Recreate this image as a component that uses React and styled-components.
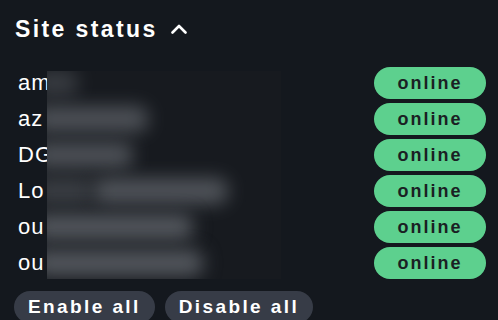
import React from 'react';
import styled, { createGlobalStyle } from 'styled-components';

const GlobalStyle = createGlobalStyle`
    html, body {
        margin: 0;
        background: #14181e;
    }
    body {
        font-family: "Liberation Sans", Arial, sans-serif;
        color: #ffffff;
    }
`

const Panel = styled.div`
    width: 498px;
    height: 320px;
    overflow: hidden;
    position: relative;
    box-sizing: border-box;
    padding: 14px 12px 0 14px;
    background: #14181e;
`

const Header = styled.div`
    display: flex;
    align-items: center;
    gap: 13px;
    height: 30px;
    margin-left: 1px;
`

const Title = styled.h2`
    margin: 0;
    font-size: 23px;
    font-weight: 700;
    letter-spacing: 2.4px;
`

const List = styled.div`
    display: flex;
    flex-direction: column;
    gap: 4px;
    margin-top: 23px;
`

const Row = styled.div`
    display: flex;
    align-items: center;
    justify-content: space-between;
    height: 32px;
`

const Name = styled.span`
    margin-left: 4px;
    width: 29px;
    overflow: hidden;
    font-size: 22px;
    letter-spacing: 1px;
    white-space: nowrap;
`

const Pill = styled.span`
    width: 112px;
    height: 32px;
    border-radius: 16px;
    background: #5dd08e;
    color: #1a1f24;
    font-size: 18px;
    font-weight: 700;
    letter-spacing: 2px;
    display: flex;
    align-items: center;
    justify-content: center;
`

/* blurred cover over the private part of the site names */
const Redact = styled.div`
    position: absolute;
    left: 47px;
    top: 71px;
    width: 234px;
    height: 208px;
    overflow: hidden;
    background: #171a1f;
    display: flex;
    flex-direction: column;
    gap: 4px;
`

const Lane = styled.div`
    height: 32px;
    flex-shrink: 0;
    display: flex;
    align-items: center;
    margin-left: -14px;
`

const Smear = styled.div`
    height: 26px;
    width: ${p => p.$w}px;
    border-radius: 10px;
    background: #53575d;
    opacity: ${p => p.$o};
    filter: blur(9px);
`

const Actions = styled.div`
    display: flex;
    gap: 10px;
    margin-top: 12px;
`

const Button = styled.button`
    height: 32px;
    padding: 0 14px;
    border: none;
    border-radius: 16px;
    background: #373c47;
    color: #ffffff;
    font-family: "Liberation Sans", Arial, sans-serif;
    font-size: 19px;
    font-weight: 700;
    letter-spacing: 2.4px;
`

const sites = [
    { name: 'am', smear: [[45, 0.55]] },
    { name: 'az', smear: [[115, 0.9]] },
    { name: 'DG', smear: [[100, 0.9]] },
    { name: 'Lo', smear: [[60, 0.6], [135, 0.95]] },
    { name: 'ou', smear: [[160, 1]] },
    { name: 'ou', smear: [[170, 1]] },
];

const ChevronUp = () => (
    <svg width="16" height="10" viewBox="0 0 16 10" fill="none">
        <path d="M1.5 8.5 L8 2 L14.5 8.5" stroke="#fff" strokeWidth="2.6" strokeLinecap="round" strokeLinejoin="round" />
    </svg>
)

export default function App() {
    return (
        <Panel>
            <GlobalStyle />
            <Header>
                <Title>Site status</Title>
                <ChevronUp />
            </Header>
            <List>
                {sites.map((s, i) => (
                    <Row key={i}>
                        <Name>{s.name}</Name>
                        <Pill>online</Pill>
                    </Row>
                ))}
            </List>
            <Redact>
                {sites.map((s, i) => (
                    <Lane key={i} style={i === 0 ? { marginTop: -4 } : undefined}>
                        {s.smear.map(([w, o], j) => <Smear key={j} $w={w} $o={o} />)}
                    </Lane>
                ))}
            </Redact>
            <Actions>
                <Button>Enable all</Button>
                <Button>Disable all</Button>
            </Actions>
        </Panel>
    )
}
